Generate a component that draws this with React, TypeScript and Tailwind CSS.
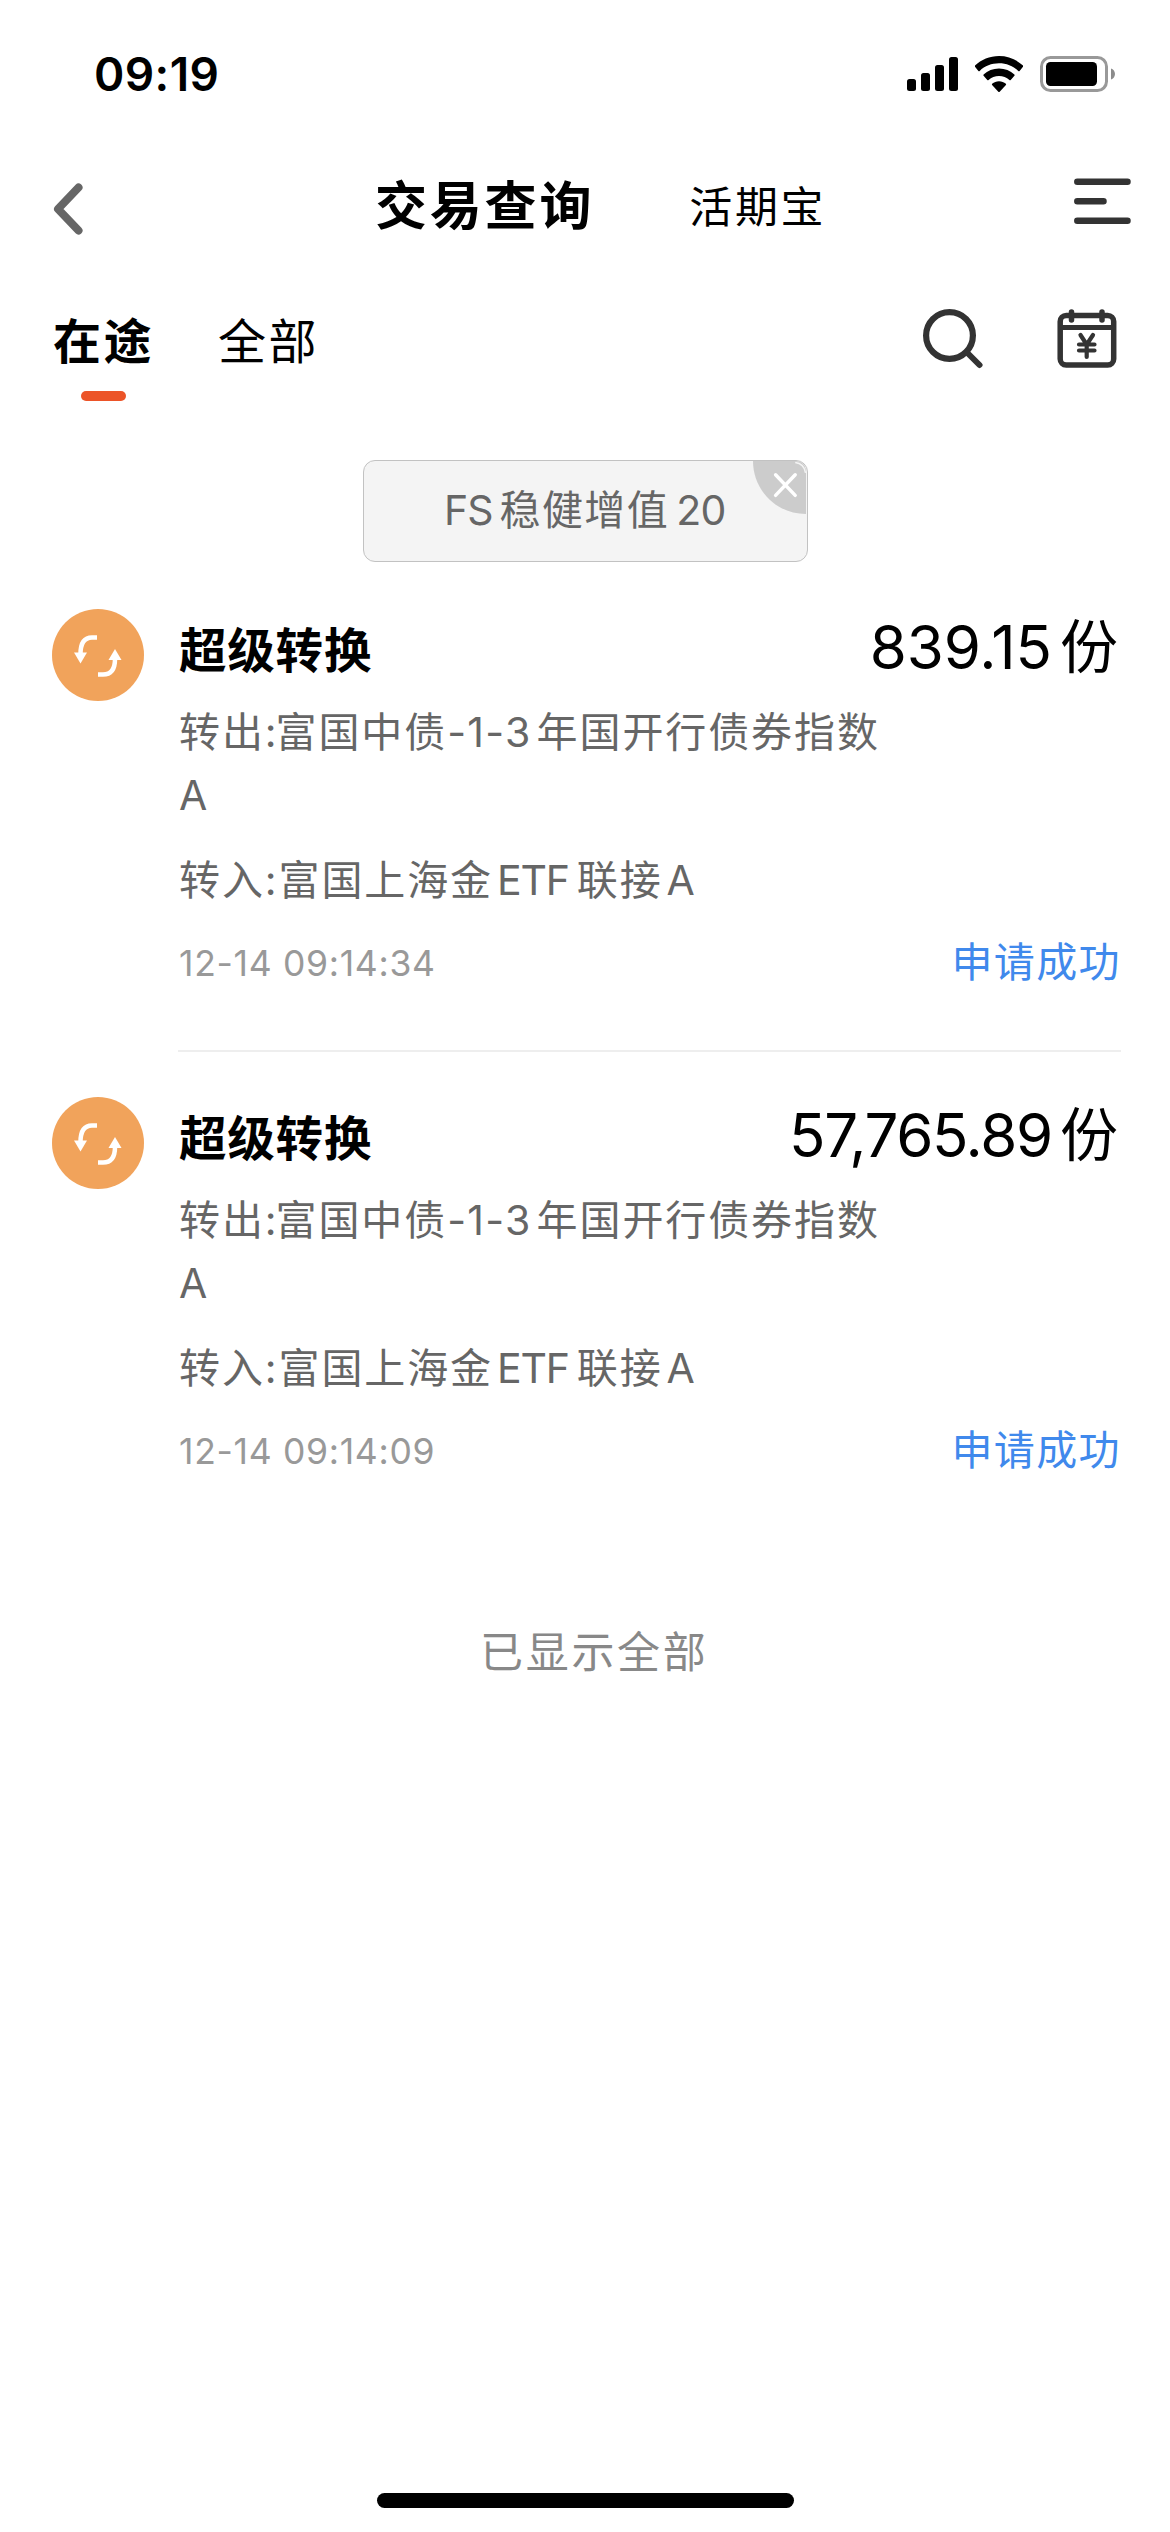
import React from "react";

const CJK = "font-['Inter','Noto_Sans_CJK_SC',sans-serif]";

function StatusBar() {
  return (
    <div className="flex h-[148px] items-center justify-between pl-[94px] pr-[54px]">
      <span className="text-[46px] font-semibold leading-[56px] tracking-[0.4px] text-black">09:19</span>
      <div className="flex items-center">
        <svg width="52" height="36" viewBox="0 0 52 36" className="mr-[16px]">
          <rect x="0" y="23" width="9" height="12" rx="2.5" />
          <rect x="14" y="17" width="9" height="18" rx="2.5" />
          <rect x="28" y="9" width="9" height="26" rx="2.5" />
          <rect x="42" y="1" width="9" height="34" rx="2.5" />
        </svg>
        <svg width="48" height="36" viewBox="0 0 48 36" className="mr-[17px]">
          <path d="M24 0C33.300 0 41.800 3.600 48 9.600C48.300 10 48.300 10.500 48 10.800L44.600 14.900C44.200 15.200 43.700 15.200 43.300 14.900C38.200 10 31.400 7.300 24 7.300S9.800 10 4.700 14.900C4.300 15.200 3.800 15.200 3.400 14.900L0 10.800C-0.300 10.500 -0.300 10 0 9.600C6.200 3.600 14.700 0 24 0Z" />
          <path d="M24 12.600C30 12.600 35.300 14.800 39.400 18.500C39.800 18.900 39.800 19.400 39.400 19.800L35.700 24C35.300 24.400 34.800 24.400 34.400 24C31.600 21.500 28 20 24 20S16.400 21.500 13.600 24C13.200 24.400 12.700 24.400 12.300 24L8.600 19.800C8.200 19.400 8.200 18.900 8.600 18.500C12.700 14.800 18 12.600 24 12.600Z" />
          <path d="M24 25.300C26.600 25.300 29 26.200 30.900 27.800C31.200 28.100 31.200 28.600 30.900 29L24.700 35.700C24.300 36.100 23.700 36.100 23.300 35.700L17.100 29C16.800 28.600 16.800 28.100 17.100 27.800C19 26.200 21.400 25.300 24 25.300Z" />
        </svg>
        <svg width="76" height="36" viewBox="0 0 76 36">
          <rect x="1.500" y="1.500" width="65" height="33" rx="9" fill="none" stroke="#999" strokeWidth="3" />
          <rect x="6" y="6" width="51" height="24" rx="4.500" />
          <path d="M71 12.500C73.300 13.300 75 15.400 75 18S73.300 22.700 71 23.500Z" fill="#8c8c8c" />
        </svg>
      </div>
    </div>
  );
}

function NavBar() {
  return (
    <div className="flex h-[118px] items-center pl-[53px] pr-[39px]">
      <svg width="30" height="52" viewBox="0 0 30 52" className="mt-[3px]" fill="none" stroke="#666" strokeWidth="8" strokeLinecap="round" strokeLinejoin="round">
        <path d="M25.500 4.500L5 26L25.500 47.500" />
      </svg>
      <h1 className="ml-[292px] whitespace-nowrap text-[52px] font-bold leading-[72px] tracking-[2.800px] text-black">交易查询</h1>
      <span className="ml-[95px] whitespace-nowrap text-[43px] leading-[60px] tracking-[2.700px] text-black">活期宝</span>
      <svg width="58" height="46" viewBox="0 0 58 46" className="mb-[13px] ml-auto" stroke="#333" strokeWidth="6.500" strokeLinecap="round">
        <path d="M4.300 3.700H54.500M4.300 23.200H30.500M4.300 42.700H54.500" />
      </svg>
    </div>
  );
}

function TabBar() {
  return (
    <div className="flex h-[154px] items-start justify-between pl-[53px] pr-[53px] pt-[41px]">
      <div className="flex text-[48px] leading-[70px] tracking-[2.500px] text-black">
        <div className="flex flex-col items-center">
          <span className="font-bold">在途</span>
          <span className="mt-[14px] h-[10px] w-[45px] rounded-full bg-[#ec5428]" />
        </div>
        <span className="ml-[64px]">全部</span>
      </div>
      <div className="flex items-start pt-[2px]">
        <svg width="60" height="60" viewBox="0 0 60 60" className="mr-[74px]" fill="none" stroke="#333" strokeLinecap="round">
          <circle cx="26.500" cy="26.500" r="23.400" strokeWidth="6.200" />
          <path d="M44 43.500L56.500 56" strokeWidth="6" />
        </svg>
        <svg width="60" height="60" viewBox="0 0 60 60" fill="none" stroke="#333" strokeLinecap="round" strokeLinejoin="round">
          <rect x="3.200" y="6.500" width="53.500" height="49.500" rx="6" strokeWidth="5.500" />
          <path d="M4 18.500H56" strokeWidth="5" />
          <path d="M14.500 3V11M45 3V11" strokeWidth="5.500" />
          <path d="M23.500 26L29.700 35.500L36 26M29.700 35.500V48M22 35.500H37.500M22 41.500H37.500" strokeWidth="4.200" />
        </svg>
      </div>
    </div>
  );
}

function FilterTag() {
  return (
    <div className="relative ml-[363px] mt-[40px] flex h-[102px] w-[445px] items-center overflow-hidden rounded-[12px] border border-[#c2c2c2] bg-[#f4f4f4] pb-[3px] pl-[80px] text-[41px] leading-[60px] text-[#666]">
      <span className="whitespace-nowrap tracking-[-1px]">FS</span>
      <span className="ml-[7px] whitespace-nowrap tracking-[1.400px]">稳健增值</span>
      <span className="ml-[7px] whitespace-nowrap tracking-[-0.600px]">20</span>
      <svg width="54" height="54" viewBox="0 0 55 55" className="absolute right-0 top-0">
        <path d="M0 0H43Q54 0 54 12V54C24 54 0 30 0 0Z" fill="#ccc" />
        <path d="M43 1.500Q52 2.500 53.500 12" fill="none" stroke="#f4f4f4" strokeWidth="1.500" />
        <path d="M23 14L43 35M43 14L23 35" stroke="#fff" strokeWidth="3.500" strokeLinecap="round" />
      </svg>
    </div>
  );
}

function SwapIcon() {
  return (
    <svg width="92" height="92" viewBox="0 0 92 92" className="mt-[-1px] shrink-0">
      <circle cx="46" cy="46" r="46" fill="#f1a35b" />
      <g fill="none" stroke="#fff" strokeWidth="4.500">
        <path d="M45 28.500H40C32 28.500 28.500 34 28.500 45" />
        <path d="M46 65.500H51C59.500 65.500 63 60 63 50" />
      </g>
      <path d="M22 43.500H35L28.500 54.500Z" fill="#fff" />
      <path d="M56.500 51H69.500L63 40Z" fill="#fff" />
    </svg>
  );
}

type Trade = { amount: string; time: string };

function Amount({ value }: { value: string }) {
  const tracking = value.includes(",") ? "tracking-[-1.300px]" : "tracking-[-0.100px]";
  return <span className={`text-[60px] leading-[80px] ${tracking}`}>{value}</span>;
}

function TradeItem({ amount, time }: Trade) {
  return (
    <div className="flex h-[488px] pl-[52px] pr-[49px]">
      <SwapIcon />
      <div className="ml-[35px] flex-1">
        <div className="flex h-[91px] items-center justify-between">
          <span className="whitespace-nowrap pb-[9px] text-[47.500px] font-bold leading-[70px] tracking-[0.800px] text-black">超级转换</span>
          <span className="mb-[18px] flex items-center whitespace-nowrap pr-[3px] text-black">
            <Amount value={amount} />
            <span className="ml-[8px] text-[58px] leading-[80px]">份</span>
          </span>
        </div>
        <div className="text-[41px] leading-[63px] tracking-[1.900px] text-[#666]">
          <p className="whitespace-nowrap">
            转出:<span className="ml-[-3px]">富国中债</span>
            <span className="tracking-[1.300px]">-1-3</span>
            <span className="ml-[5px]">年国开行债券指数</span>
            <br />A
          </p>
          <p className="mt-[22px] whitespace-nowrap">
            转入:富国上海金
            <span className="ml-[4px] tracking-[-1.200px]">ETF</span>
            <span className="ml-[8px]">联接</span>
            <span className="ml-[4px]">A</span>
          </p>
        </div>
        <div className="mt-[19px] flex h-[64px] items-center justify-between">
          <span className="whitespace-nowrap pt-[2px] text-[35.500px] tracking-[0.700px] text-[#999]">{time}</span>
          <span className="whitespace-nowrap pb-[3px] text-[41px] leading-[60px] tracking-[1.400px] text-[#4089ec]">申请成功</span>
        </div>
      </div>
    </div>
  );
}

export default function App() {
  return (
    <main className={`${CJK} flex h-[2532px] w-[1170px] flex-col overflow-hidden bg-white`} lang="zh-CN">
      <StatusBar />
      <NavBar />
      <TabBar />
      <FilterTag />
      <section className="mt-[48px]">
        <div className="relative">
          <TradeItem amount="839.15" time="12-14 09:14:34" />
          <div className="absolute bottom-[46px] left-[178px] right-[49px] h-[2px] bg-[#eee]" />
        </div>
        <TradeItem amount="57,765.89" time="12-14 09:14:09" />
      </section>
      <p className="ml-[480px] mt-[34px] whitespace-nowrap text-[43px] leading-[64px] tracking-[2.700px] text-[#888]">已显示全部</p>
      <div className="mx-auto mb-[24px] mt-auto h-[15px] w-[417px] rounded-full bg-black" />
    </main>
  );
}
